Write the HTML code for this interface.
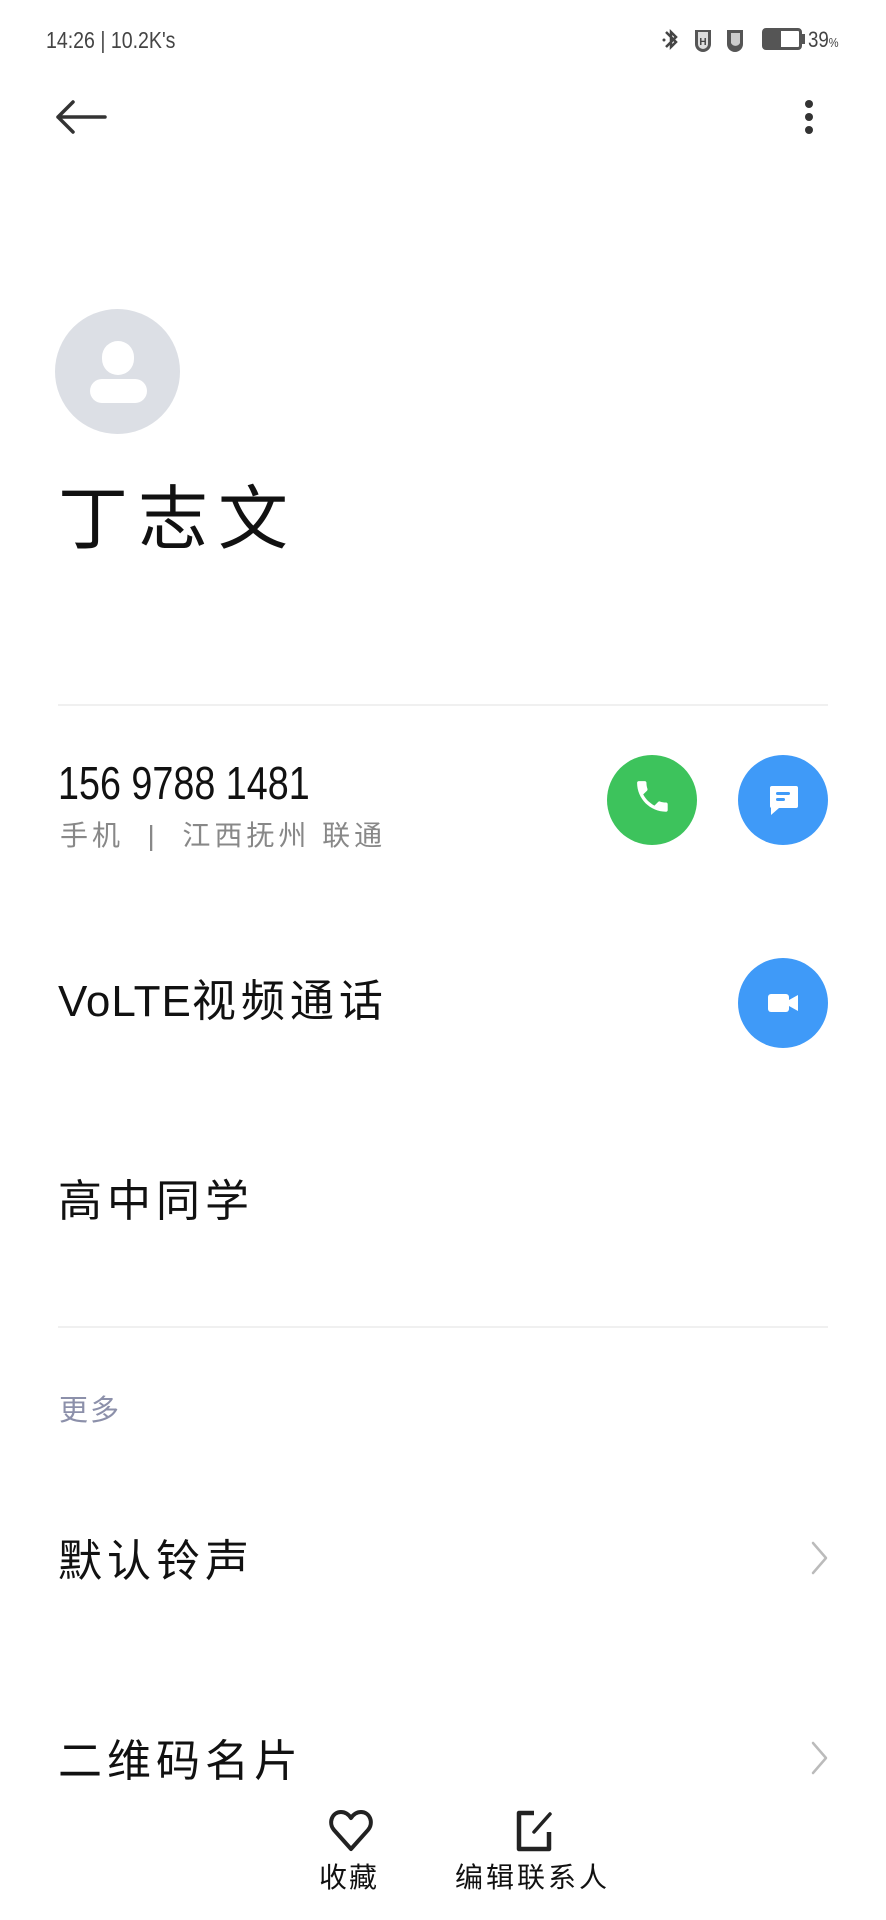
<!DOCTYPE html>
<html><head><meta charset="utf-8"><style>
*{margin:0;padding:0;box-sizing:border-box}
body{width:886px;height:1920px;background:#fff;position:relative;overflow:hidden;font-family:"Liberation Sans","Noto Sans CJK SC",sans-serif;color:#111}
.a{position:absolute;white-space:nowrap}
.t{font-size:44px;letter-spacing:5px;line-height:1}
.circ{position:absolute;width:90px;height:90px;border-radius:50%}
</style></head><body>
<div class="a" style="left:46px;top:27px;font-size:23px;color:#444;transform:scaleX(0.85);transform-origin:left">14:26 | 10.2K's</div>
<svg class="a" style="left:660px;top:26px" width="40" height="28" viewBox="0 0 40 28"><path d="M6 6l10 10 -5 5V6l5 5 -10 10" stroke="#444" stroke-width="2.5" fill="none"/><circle cx="4" cy="14" r="1.5" fill="#444"/></svg>
<svg class="a" style="left:692px;top:27px" width="22" height="26" viewBox="0 0 22 26"><path d="M3 3h16v14a8 8 0 0 1-16 0z" fill="#555"/><path d="M6 5h10v12a5 5 0 0 1-10 0z" fill="#ddd"/><text x="11" y="18" font-size="10" font-weight="bold" text-anchor="middle" fill="#444" font-family="Liberation Sans">H</text></svg>
<svg class="a" style="left:724px;top:27px" width="22" height="26" viewBox="0 0 22 26"><path d="M3 3h16v14a8 8 0 0 1-16 0z" fill="#555"/><path d="M7 6h9v10a5 5 0 0 1-9 0z" fill="#ccc"/></svg>
<div class="a" style="left:762px;top:28px;width:40px;height:22px;border:3px solid #555;border-radius:4px;"><div style="width:16px;height:16px;background:#555"></div></div>
<div class="a" style="left:802px;top:34px;width:3px;height:10px;background:#555"></div>
<div class="a" style="left:808px;top:27px;font-size:22px;color:#444;transform:scaleX(0.85);transform-origin:left">39<span style="font-size:13px">%</span></div>

<svg class="a" style="left:55px;top:99px" width="52" height="36" viewBox="0 0 52 36"><path d="M50 18H3M18 3L3 18l15 15" stroke="#333" stroke-width="3.5" fill="none" stroke-linecap="round" stroke-linejoin="round"/></svg>
<div class="a" style="left:805px;top:100px;width:8px;height:8px;border-radius:50%;background:#333"></div>
<div class="a" style="left:805px;top:113px;width:8px;height:8px;border-radius:50%;background:#333"></div>
<div class="a" style="left:805px;top:126px;width:8px;height:8px;border-radius:50%;background:#333"></div>

<div class="a" style="left:55px;top:309px;width:125px;height:125px;border-radius:50%;background:#dcdfe5"></div>
<div class="a" style="left:102px;top:341px;width:32px;height:34px;border-radius:16px;background:#fff"></div>
<div class="a" style="left:90px;top:379px;width:57px;height:24px;border-radius:12px;background:#fff"></div>

<div class="a" style="left:58px;top:484px;font-size:70px;letter-spacing:10px;line-height:1">丁志文</div>

<div class="a" style="left:58px;top:704px;width:770px;height:2px;background:#f0f0f0"></div>

<div class="a" style="left:58px;top:760px;font-size:46px;line-height:1;transform:scaleX(0.82);transform-origin:left">156 9788 1481</div>
<div class="a" style="left:60px;top:822px;font-size:28px;color:#888;letter-spacing:4px;line-height:1">手机 &nbsp;| &nbsp;江西抚州 联通</div>

<div class="circ" style="left:607px;top:755px;background:#3dc35c"></div>
<svg class="a" style="left:628px;top:776px" width="48" height="48" viewBox="0 0 24 24"><path d="M6.6 10.8c1.4 2.8 3.8 5.1 6.6 6.6l2.2-2.2c.3-.3.7-.4 1-.2 1.1.4 2.3.6 3.6.6.6 0 1 .4 1 1V20c0 .6-.4 1-1 1C10.6 21 3 13.4 3 4c0-.6.4-1 1-1h3.5c.6 0 1 .4 1 1 0 1.3.2 2.5.6 3.6.1.3 0 .7-.2 1z" fill="#fff" transform="translate(2 0) scale(.85)"/></svg>
<div class="circ" style="left:738px;top:755px;background:#3f9af8"></div>
<svg class="a" style="left:763px;top:780px" width="40" height="40" viewBox="0 0 40 40"><path d="M7 6h26a2 2 0 0 1 2 2v18a2 2 0 0 1-2 2H16l-8 7v-7a2 2 0 0 1-1-2V8a2 2 0 0 1 2-2z" fill="#fff"/><rect x="13" y="12" width="14" height="3" rx="1.5" fill="#3f9af8"/><rect x="13" y="18" width="9" height="3" rx="1.5" fill="#3f9af8"/></svg>

<div class="a t" style="left:58px;top:980px"><span style="letter-spacing:1px">VoLTE</span>视频通话</div>
<div class="circ" style="left:738px;top:958px;background:#3f9af8"></div>
<svg class="a" style="left:763px;top:983px" width="40" height="40" viewBox="0 0 40 40"><rect x="5" y="11" width="21" height="18" rx="3" fill="#fff"/><path d="M26 17l9-5v16l-9-5z" fill="#fff"/></svg>

<div class="a t" style="left:58px;top:1180px">高中同学</div>
<div class="a" style="left:58px;top:1326px;width:770px;height:2px;background:#f0f0f0"></div>

<div class="a" style="left:59px;top:1397px;font-size:29px;color:#8c90aa;letter-spacing:2px;line-height:1">更多</div>

<div class="a t" style="left:58px;top:1540px">默认铃声</div>
<svg class="a" style="left:810px;top:1540px" width="20" height="36" viewBox="0 0 20 36"><path d="M3 3l13 15L3 33" stroke="#bbb" stroke-width="2.5" fill="none" stroke-linecap="round" stroke-linejoin="round"/></svg>
<div class="a t" style="left:58px;top:1740px">二维码名片</div>
<svg class="a" style="left:810px;top:1740px" width="20" height="36" viewBox="0 0 20 36"><path d="M3 3l13 15L3 33" stroke="#bbb" stroke-width="2.5" fill="none" stroke-linecap="round" stroke-linejoin="round"/></svg>

<svg class="a" style="left:326px;top:1805px" width="50" height="50" viewBox="0 0 50 50"><path d="M25 44L8 25C2 18 6 7 15 7c5 0 8 3 10 6 2-3 5-6 10-6 9 0 13 11 7 18z" stroke="#222" stroke-width="4" fill="none" stroke-linejoin="round"/></svg>
<div class="a" style="left:319px;top:1864px;font-size:28px;letter-spacing:2px;line-height:1">收藏</div>
<svg class="a" style="left:512px;top:1808px" width="46" height="46" viewBox="0 0 46 46"><path d="M22 5H7v36h30V24" stroke="#222" stroke-width="4.5" fill="none" stroke-linejoin="round"/><path d="M22 24L38 6" stroke="#222" stroke-width="3.5" stroke-linecap="round"/></svg>
<div class="a" style="left:455px;top:1864px;font-size:28px;letter-spacing:3px;line-height:1">编辑联系人</div>
</body></html>
